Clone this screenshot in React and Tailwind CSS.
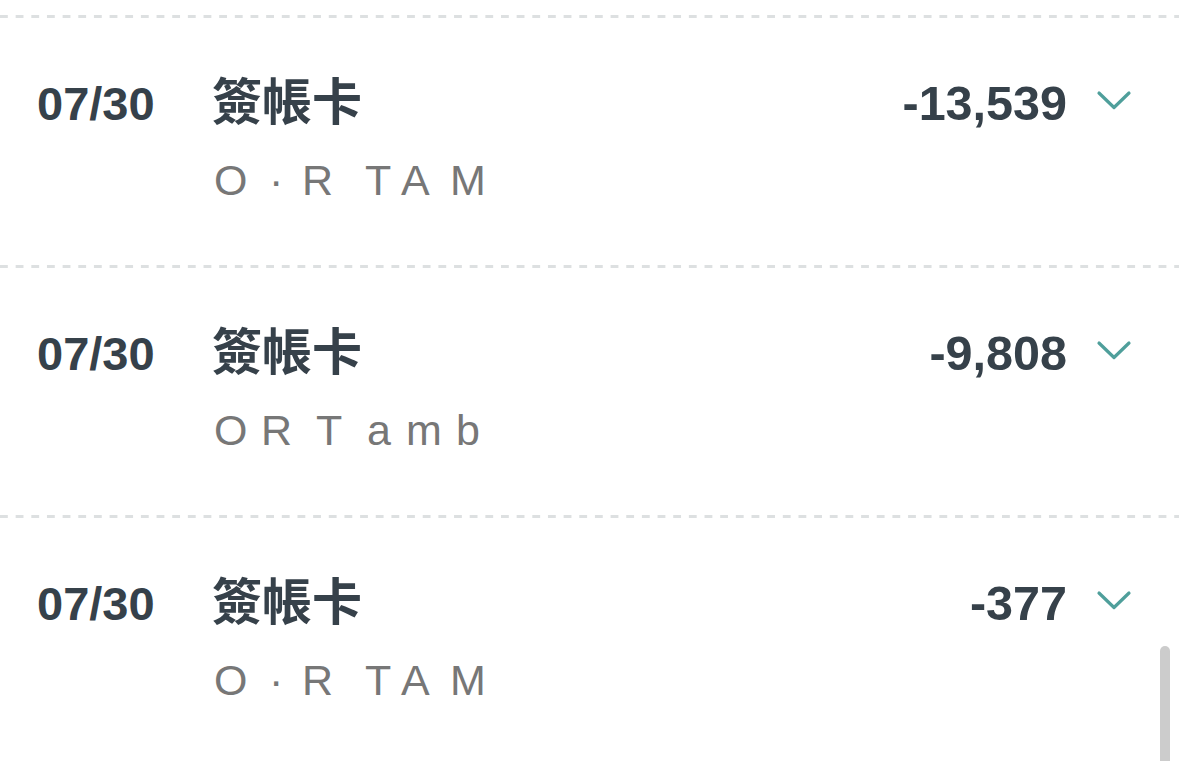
import React from "react";

// sub labels are drawn on a loose grid, each glyph in a cell of its own width
const TAM = [
  ["O", 55],
  ["·", 33],
  ["R", 63],
  ["T", 36],
  ["A", 49],
  ["M", 40],
];
const TAMB = [
  ["O", 47],
  ["R", 55],
  ["T", 51],
  ["a", 39],
  ["m", 50],
  ["b", 30],
];

const rows = [
  { date: "07/30", title: "簽帳卡", sub: TAM, amount: "-13,539" },
  { date: "07/30", title: "簽帳卡", sub: TAMB, amount: "-9,808" },
  { date: "07/30", title: "簽帳卡", sub: TAM, amount: "-377" },
];

function Chevron() {
  return (
    <svg width="36" height="22" viewBox="0 0 36 22" fill="none">
      <path d="M3 3 L18 17.5 L33 3" stroke="#4f9f9b" strokeWidth="3.2" strokeLinecap="round" strokeLinejoin="round" />
    </svg>
  );
}

export default function App() {
  return (
    <div className="relative h-[761px] w-[1179px] overflow-hidden bg-white font-['Liberation_Sans','Noto_Sans_CJK_TC',sans-serif]">
      <div className="h-[15px]" />
      {rows.map((r, i) => (
        <div key={i} className="h-[250px]">
          <div className="h-[3px] bg-[linear-gradient(to_right,#dde0e1_8px,transparent_8px)] bg-[length:15.67px_3px]" />
          <div className="flex items-baseline pl-[37px] pr-[47px] pt-[55px]">
            <div className="w-[175px] text-[47px] font-bold leading-none text-[#36414a]">{r.date}</div>
            <div className="flex flex-1 flex-col">
              <div className="font-['Noto_Sans_CJK_TC',sans-serif] text-[50px] font-bold leading-none text-[#36414a]">
                {r.title}
              </div>
              <div className="mt-[36px] flex pl-[2px] text-[43px] leading-none text-[#777777]">
                {r.sub.map(([ch, w], j) => (
                  <span key={j} className="inline-block" style={{ width: w }}>
                    {ch}
                  </span>
                ))}
              </div>
            </div>
            <div className="text-[48.5px] font-bold leading-none text-[#36414a]">{r.amount}</div>
            <div className="ml-[29px] self-start pt-[17px]">
              <Chevron />
            </div>
          </div>
        </div>
      ))}
      <div className="absolute right-[9px] top-[646px] h-[130px] w-[10px] rounded-t-full bg-[#cccccc]" />
    </div>
  );
}
